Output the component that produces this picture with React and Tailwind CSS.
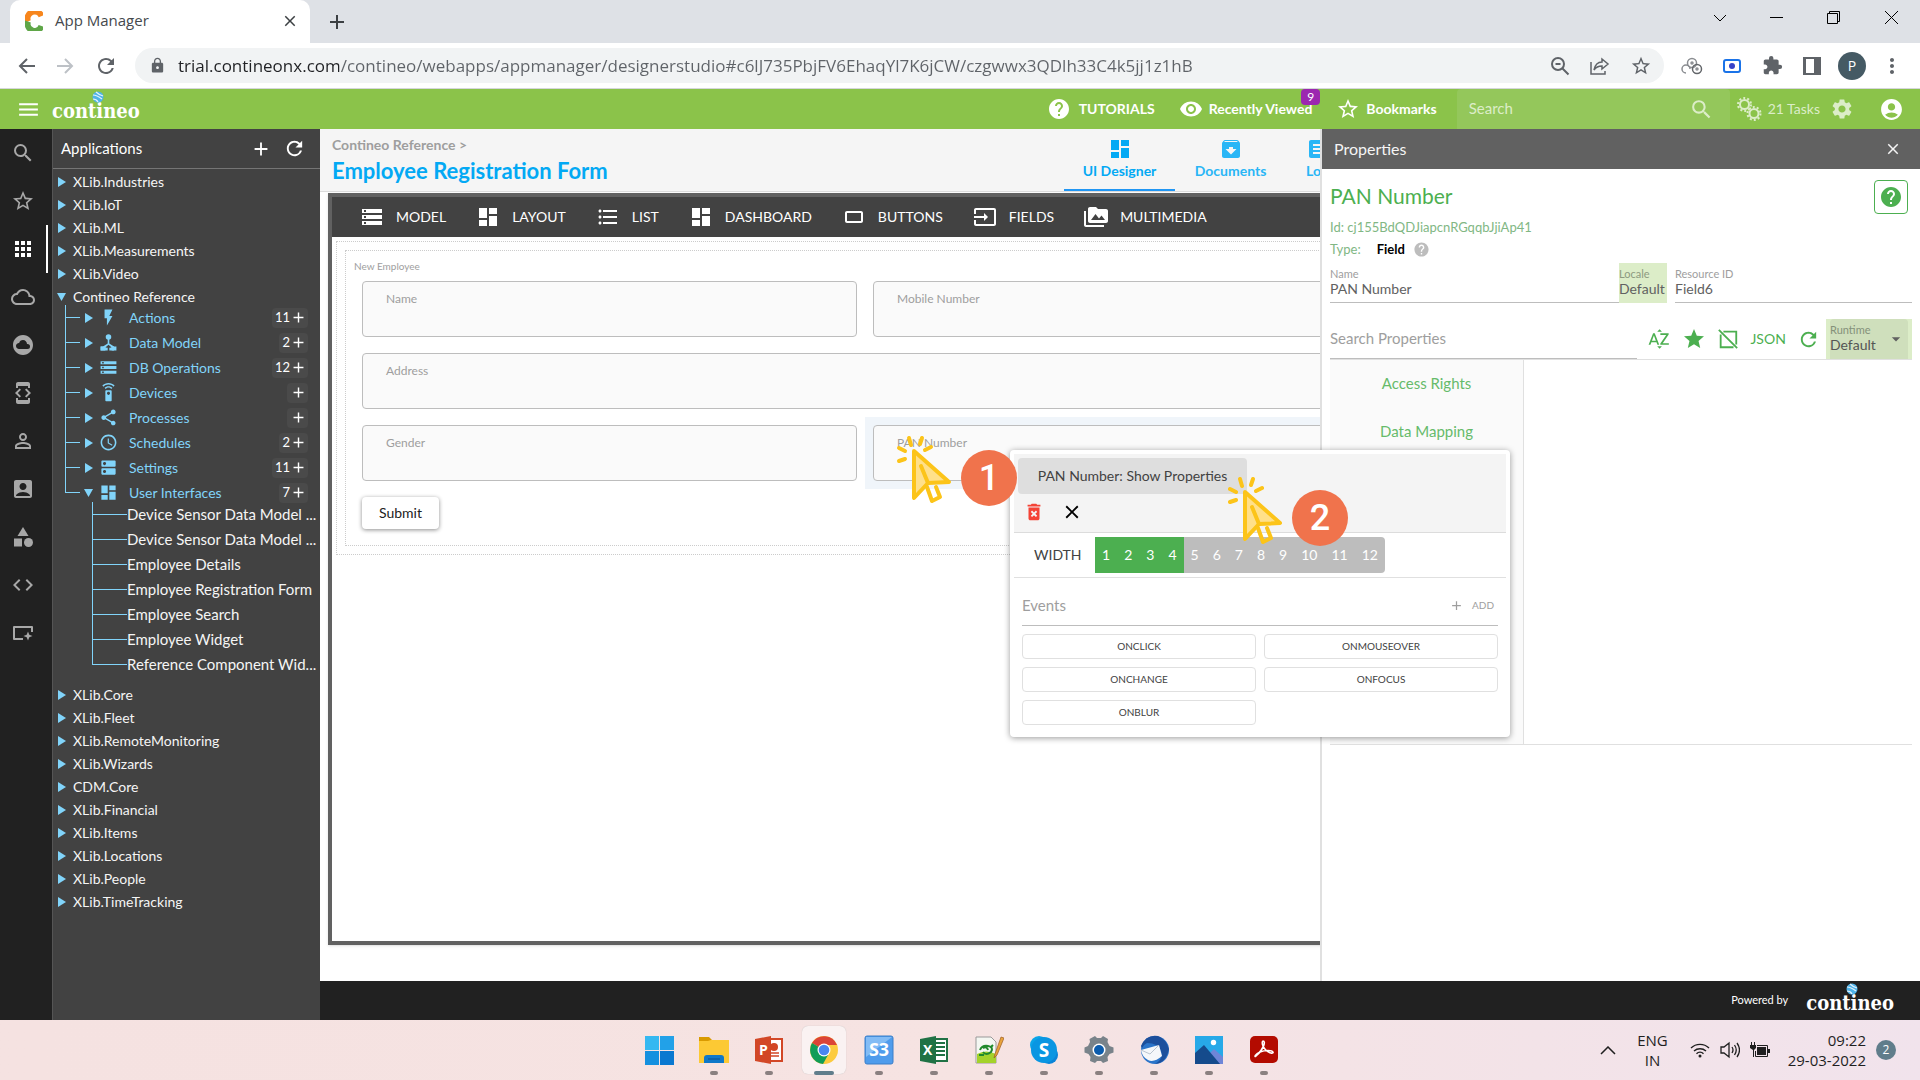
import {
  MdAccessTime,
  MdAccountBox,
  MdAccountCircle,
  MdAdd,
  MdApps,
  MdArchive,
  MdArrowDropDown,
  MdArticle,
  MdCategory,
  MdClose,
  MdCloudCircle,
  MdCloudQueue,
  MdCode,
  MdCrop32,
  MdDashboard,
  MdDeleteForever,
  MdDeveloperMode,
  MdDns,
  MdExtension,
  MdFlashOn,
  MdFormatListBulleted,
  MdHelp,
  MdInput,
  MdLock,
  MdMenu,
  MdMoreVert,
  MdPermIdentity,
  MdPermMedia,
  MdRefresh,
  MdSearch,
  MdSettings,
  MdSettingsRemote,
  MdShare,
  MdSortByAlpha,
  MdStar,
  MdStarBorder,
  MdStorage,
  MdVisibility,
} from "react-icons/md";

const UI_FONT = "font-[Lato,sans-serif]";
const OS_FONT = "font-['Open_Sans',sans-serif]";

function DataModelIcon({ size = 20 }) {
  return (
    <svg width={size} height={size} viewBox="0 0 24 24" fill="currentColor">
      <circle cx="12" cy="5" r="3.5" />
      <path d="M11 7h2v6.2l6 4V22h-6v-3.500l3-.3-4-3.300-4 3.300 3 .3V22H2v-4.800h3l6-4z" />
      <path d="M2 17h6v5H2zM16 17h6v5h-6z" />
    </svg>
  );
}

function ScreenSparkIcon({ size = 24 }) {
  return (
    <svg width={size} height={size} viewBox="0 0 24 24" fill="none">
      <path d="M12 18H3V6h18v5" stroke="currentColor" strokeWidth="2" strokeLinejoin="round" />
      <path d="M17 10.500l1.300 3.200 3.200 1.300-3.200 1.300L17 19.500l-1.300-3.200-3.200-1.300 3.200-1.300z" fill="currentColor" />
    </svg>
  );
}

function NoBoxIcon() {
  return (
    <svg width="22" height="22" viewBox="0 0 24 24" fill="none" stroke="currentColor" strokeWidth="2">
      <path d="M7 4h14v14M4 7v14h14M2 2l20 20" />
    </svg>
  );
}

function GearsIcon() {
  return (
    <svg width="26" height="26" viewBox="0 0 26 26" fill="none" stroke="currentColor">
      <circle cx="8.500" cy="8.500" r="4.500" strokeWidth="2" />
      <circle cx="8.500" cy="8.500" r="6.500" strokeWidth="2" strokeDasharray="2 2.080" />
      <circle cx="18" cy="17.500" r="4.500" strokeWidth="2" />
      <circle cx="18" cy="17.500" r="6.500" strokeWidth="2" strokeDasharray="2 2.080" />
    </svg>
  );
}

function Logo() {
  return (
    <span className="relative inline-block font-['DejaVu_Serif_Condensed','DejaVu_Serif',serif] text-xl leading-6 font-bold text-white">
      contineo
      <svg className="absolute -top-2 left-10" width="12" height="12" viewBox="0 0 12 12">
        <circle cx="6" cy="6" r="5.500" fill="#4fb3e8" />
        <path d="M1 4c3 0 5 1 9 4M4 1c2 2 4 3 7 4M1 8c2 0 4 1 5 3" stroke="#e3f2fd" strokeWidth="1.200" fill="none" />
      </svg>
    </span>
  );
}

function BrowserChrome() {
  return (
    <header className={`${OS_FONT} text-[#5f6368]`}>
      <div className="flex h-[43px] items-center bg-[#dee1e6] pl-[10px]">
        <div className="flex h-full w-[300px] items-center rounded-t-[10px] bg-white pr-[11px] pb-[2px] pl-[15px]">
          <svg width="18" height="20" viewBox="0 0 18 20" fill="none" strokeWidth="6">
            <path d="M16.500 5A6.500 6.500 0 0 0 3 10.500" stroke="#f7861d" />
            <path d="M3 10.500A6.500 6.500 0 0 0 16.500 15" stroke="#5fa648" />
          </svg>
          <span className="ml-3 flex-1 text-[15px] text-[#45494d]">App Manager</span>
          <button aria-label="Close tab" className="text-[#3c4043]"><MdClose size={18} /></button>
        </div>
        <button aria-label="New tab" className="ml-[15px] text-[#3c4043]"><MdAdd size={24} /></button>
        <div className="mb-2 ml-auto flex items-center text-black">
          <button aria-label="Search tabs" className="flex w-[57px] justify-center">
            <svg width="14" height="8" viewBox="0 0 14 8" fill="none" stroke="currentColor"><path d="M1 1l6 6 6-6" /></svg>
          </button>
          <button aria-label="Minimize" className="flex w-[57px] justify-center">
            <svg width="13" height="13" viewBox="0 0 13 13" stroke="currentColor"><path d="M0 6.500h13" /></svg>
          </button>
          <button aria-label="Restore" className="flex w-[57px] justify-center">
            <svg width="13" height="13" viewBox="0 0 13 13" fill="none" stroke="currentColor">
              <path d="M.5 2.500h10v10H.5zM2.500 2.500v-2h10v10h-2" />
            </svg>
          </button>
          <button aria-label="Close" className="flex w-[58px] justify-center">
            <svg width="13" height="13" viewBox="0 0 13 13" stroke="currentColor"><path d="M0 0l13 13M13 0L0 13" /></svg>
          </button>
        </div>
      </div>

      <div className="flex h-[46px] items-center border-b border-[#d5d7da] bg-white">
        <div className="flex w-[135px] items-center gap-5 pl-[18px]">
          <button aria-label="Back">
            <svg width="18" height="18" viewBox="0 0 18 18" fill="none" stroke="currentColor" strokeWidth="2"><path d="M17 9H2M9 2L2 9l7 7" /></svg>
          </button>
          <button aria-label="Forward" className="text-[#bdc1c6]">
            <svg width="18" height="18" viewBox="0 0 18 18" fill="none" stroke="currentColor" strokeWidth="2"><path d="M1 9h15M9 2l7 7-7 7" /></svg>
          </button>
          <button aria-label="Reload"><MdRefresh size={24} /></button>
        </div>
        <div className="flex h-[35px] flex-1 items-center rounded-full bg-[#f1f3f4] pr-3 pl-[14px]">
          <MdLock size={17} />
          <input
            aria-label="Address"
            defaultValue="trial.contineonx.com/contineo/webapps/appmanager/designerstudio#c6lJ735PbjFV6EhaqYl7K6jCW/czgwwx3QDlh33C4k5jj1z1hB"
            className="ml-3 flex-1 bg-[linear-gradient(to_right,#202124_161px,#5f6368_161px)] bg-clip-text text-[17px] text-transparent outline-none"
          />
          <div className="flex items-center gap-5">
            <button aria-label="Zoom out">
              <svg width="20" height="20" viewBox="0 0 20 20" fill="none" stroke="currentColor" strokeWidth="2">
                <circle cx="8" cy="8" r="6" /><path d="M12.500 12.500l6 6M5.500 8h5" />
              </svg>
            </button>
            <button aria-label="Share">
              <svg width="20" height="20" viewBox="0 0 20 20" fill="none" stroke="currentColor" strokeWidth="1.500">
                <path d="M1 6v12h14v-3M12 3l6 5-6 5v-3c-4 0-6 1-8 4 1-5 4-8 8-8z" />
              </svg>
            </button>
            <button aria-label="Bookmark page"><MdStarBorder size={22} /></button>
          </div>
        </div>
        <div className="mr-2 ml-2 grid w-60 grid-cols-6 place-items-center">
          <svg width="22" height="18" viewBox="0 0 22 18" fill="none" stroke="#8a8d91" strokeWidth="1.500">
            <circle cx="11" cy="6" r="4.500" /><circle cx="11" cy="6" r="1" /><circle cx="16" cy="12" r="4.500" stroke="#63666a" />
            <circle cx="16" cy="12" r="1" /><path d="M5 16a4 4 0 1 1 4-4" />
          </svg>
          <svg width="18" height="14" viewBox="0 0 18 14" fill="none">
            <rect x="1" y="1" width="16" height="12" rx="2" stroke="#1a73e8" strokeWidth="2" /><circle cx="9" cy="7" r="3" fill="#3742c8" />
          </svg>
          <MdExtension size={21} />
          <svg width="18" height="18" viewBox="0 0 18 18" fill="none">
            <path d="M1.500 1.500h15v15h-15z" stroke="currentColor" strokeWidth="3" /><path d="M3 2h8v14H3z" fill="#fff" /><path d="M11 0h7v18h-7z" fill="#fff" /><path d="M2 1h15v16H2z" stroke="currentColor" strokeWidth="2" /><path d="M2 2h9v14H2z" fill="#fff" opacity="0" /><path d="M11 2h6v14h-6z" fill="currentColor" />
          </svg>
          <button className="size-7 rounded-full bg-[#455a64] text-sm text-white">P</button>
          <button aria-label="Menu"><MdMoreVert size={24} /></button>
        </div>
      </div>
    </header>
  );
}

function AppBar() {
  return (
    <nav className="flex h-10 items-center bg-[#8bc34a] text-sm font-bold text-white">
      <button aria-label="Toggle menu" className="ml-4"><MdMenu size={25} /></button>
      <a href="#home" className="mt-1 ml-[11px]"><Logo /></a>
      <button className="ml-auto flex items-center gap-2"><MdHelp size={24} />TUTORIALS</button>
      <button className="relative ml-6 flex items-center gap-[6px]">
        <MdVisibility size={24} />
        Recently Viewed
        <span className="absolute -top-2 -right-2 flex h-4 w-[19px] items-center justify-center rounded-sm bg-[#9c27b0] text-xs font-normal">9</span>
      </button>
      <button className="ml-6 flex items-center gap-[6px]"><MdStarBorder size={24} />Bookmarks</button>
      <div className="ml-5 flex h-full w-[273px] items-center rounded-t-sm bg-[#94c75b] px-3 font-normal">
        <input aria-label="Search" placeholder="Search" className="min-w-0 flex-1 text-[15px] outline-none placeholder:text-[#dcedc8]" />
        <button aria-label="Run search" className="mr-1 text-[#dcedc8]"><MdSearch size={25} /></button>
      </div>
      <button className="ml-[6px] flex items-center gap-[6px] font-normal text-[#dcedc8]"><GearsIcon />21 Tasks</button>
      <button aria-label="Settings" className="ml-[10px] text-[#dcedc8]"><MdSettings size={24} /></button>
      <button aria-label="Account" className="mr-4 ml-[25px]"><MdAccountCircle size={25} /></button>
    </nav>
  );
}

const railItems = [
  { label: "Search", icon: MdSearch },
  { label: "Favourites", icon: MdStarBorder },
  { label: "Applications", icon: MdApps, active: true },
  { label: "Cloud", icon: MdCloudQueue },
  { label: "Cloud services", icon: MdCloudCircle },
  { label: "Developer", icon: MdDeveloperMode },
  { label: "Users", icon: MdPermIdentity },
  { label: "Contacts", icon: MdAccountBox },
  { label: "Categories", icon: MdCategory },
  { label: "Code", icon: MdCode },
  { label: "Screens", icon: ScreenSparkIcon },
];

function Rail() {
  return (
    <div className="flex w-[53px] flex-col border-r border-[#555] bg-[#212121]">
      {railItems.map(({ label, icon: Icon, active }) => (
        <button
          key={label}
          aria-label={label}
          className={`mr-1 flex h-12 items-center justify-center border-r-2 ${active ? "border-white text-white" : "border-transparent text-[#a8a8a8]"}`}
        >
          <Icon size={24} />
        </button>
      ))}
    </div>
  );
}

const topApps = ["XLib.Industries", "XLib.IoT", "XLib.ML", "XLib.Measurements", "XLib.Video"];
const bottomApps = [
  "XLib.Core",
  "XLib.Fleet",
  "XLib.RemoteMonitoring",
  "XLib.Wizards",
  "CDM.Core",
  "XLib.Financial",
  "XLib.Items",
  "XLib.Locations",
  "XLib.People",
  "XLib.TimeTracking",
];

const sections = [
  { label: "Actions", icon: MdFlashOn, count: 11 },
  { label: "Data Model", icon: DataModelIcon, count: 2 },
  { label: "DB Operations", icon: MdStorage, count: 12 },
  { label: "Devices", icon: MdSettingsRemote },
  { label: "Processes", icon: MdShare },
  { label: "Schedules", icon: MdAccessTime, count: 2 },
  { label: "Settings", icon: MdDns, count: 11 },
  { label: "User Interfaces", icon: MdDashboard, count: 7, open: true },
];

const screens = [
  "Device Sensor Data Model ...",
  "Device Sensor Data Model ...",
  "Employee Details",
  "Employee Registration Form",
  "Employee Search",
  "Employee Widget",
  "Reference Component Wid...",
];

function Caret({ open }) {
  return (
    <svg className="shrink-0 text-[#81d4fa]" width="9" height="10" viewBox="0 0 9 10" fill="currentColor">
      {open ? <path d="M0 1h9L4.500 9z" /> : <path d="M1 0l8 5-8 5z" />}
    </svg>
  );
}

function AppRow({ label, open }) {
  return (
    <button className="flex h-[23px] w-full items-center gap-[7px] pl-1 text-left">
      <Caret open={open} />
      {label}
    </button>
  );
}

function Sidebar() {
  return (
    <aside className="w-[267px] shrink-0 bg-[#424242] text-sm text-[#f5f5f5]">
      <div className="flex h-10 items-center border-b border-[#757575] pr-[14px] pl-2 text-white">
        <h2 className="flex-1 text-[15px]">Applications</h2>
        <button aria-label="Add application" className="mr-[11px]"><MdAdd size={22} /></button>
        <button aria-label="Refresh"><MdRefresh size={23} /></button>
      </div>

      <ul className="pt-[1px]">
        {topApps.map((name) => (
          <li key={name}><AppRow label={name} /></li>
        ))}
        <li>
          <AppRow label="Contineo Reference" open />
          <ul className="-mt-[3px] pr-3 pl-3">
            {sections.map(({ label, icon: Icon, count, open }) => (
              <li key={label} className="flex h-[25px] items-center text-[#81d4fa]">
                {/* tree branch */}
                <span className={`w-[15px] border-l border-[#81d4fa] ${open ? "h-[13px] self-start border-b" : "h-full"}`}>
                  {!open && <span className="block h-[13px] border-b border-[#81d4fa]" />}
                </span>
                <button className="flex flex-1 items-center pl-1 text-left">
                  <Caret open={open} />
                  <span className="ml-[6px] flex w-[30px]"><Icon size={19} /></span>
                  {label}
                </button>
                <button aria-label={`Add to ${label}`} className="flex h-5 items-center rounded-sm bg-[#4a4a4a] pr-[1px] pl-[3px] text-[13px] text-white">
                  {count}
                  <MdAdd size={17} />
                </button>
              </li>
            ))}
          </ul>
          <ul className="-mt-[3px] mb-[6px] pl-[39px] text-[15px]">
            {screens.map((name, i) => (
              <li key={i} className="flex h-[25px] items-center">
                <span className={`w-[35px] shrink-0 border-l border-[#81d4fa] ${i === screens.length - 1 ? "h-[13px] self-start border-b" : "h-full"}`}>
                  {i < screens.length - 1 && <span className="block h-[13px] border-b border-[#81d4fa]" />}
                </span>
                <a href="#screen" className="whitespace-nowrap">{name}</a>
              </li>
            ))}
          </ul>
        </li>
        {bottomApps.map((name) => (
          <li key={name}><AppRow label={name} /></li>
        ))}
      </ul>
    </aside>
  );
}

const paletteItems = [
  { label: "MODEL", icon: MdStorage },
  { label: "LAYOUT", icon: MdDashboard },
  { label: "LIST", icon: MdFormatListBulleted },
  { label: "DASHBOARD", icon: MdDashboard },
  { label: "BUTTONS", icon: MdCrop32 },
  { label: "FIELDS", icon: MdInput },
  { label: "MULTIMEDIA", icon: MdPermMedia },
];

function Field({ label, wide, selected }) {
  return (
    <div className={`p-2 ${wide ? "col-span-2" : ""} ${selected ? "bg-[#f0f5fa]" : ""}`}>
      <label className="block h-14 rounded border border-[#bdbdbd] bg-[#fafafa] px-[23px] pt-[9px] text-xs leading-4 text-[#9e9e9e]">
        {label}
        <input className="block h-6 w-full outline-none" />
      </label>
    </div>
  );
}

function Designer() {
  return (
    <main className="flex min-w-0 flex-1 flex-col overflow-hidden bg-white">
      <div className="flex h-[63px] shrink-0 border-b border-[#dcdcdc] bg-[#f5f5f5] pl-3 font-bold">
        <div className="flex-1">
          <p className="mt-2 text-sm leading-4 text-[#9e9e9e]">Contineo Reference &gt;</p>
          <h1 className="mt-1 text-[22px] leading-7 text-[#03a9f4]">Employee Registration Form</h1>
        </div>
        <div role="tablist" className="-mr-[70px] flex text-sm leading-5 text-[#29b6f6]">
          <button role="tab" aria-selected="true" className="flex w-[111px] flex-col items-center border-b-2 border-[#2196f3] pt-2 text-[#03a9f4]">
            <MdDashboard size={24} />
            UI Designer
          </button>
          <button role="tab" className="flex w-[111px] flex-col items-center pt-2">
            <MdArchive size={24} />
            Documents
          </button>
          <button role="tab" className="flex w-[104px] flex-col items-start pt-2 pl-[20px]">
            <MdArticle size={24} />
            Localization
          </button>
        </div>
      </div>

      <div className="mt-[1px] -mr-[82px] mb-9 ml-2 flex-1 border-4 border-[#616161] shadow">
        <div className="flex h-10 items-center bg-[#424242] pl-7 text-sm text-white">
          {paletteItems.map(({ label, icon: Icon }) => (
            <button key={label} className="mr-[30px] flex items-center gap-3"><Icon size={24} />{label}</button>
          ))}
        </div>
        <div className="m-1 border border-dotted border-[#ccc] p-2">
          <form className="border border-dotted border-[#ccc] p-2">
            <p className="h-[14px] text-[10px] leading-[14px] text-[#9e9e9e]">New Employee</p>
            <div className="grid grid-cols-2">
              <Field label="Name" />
              <Field label="Mobile Number" />
              <Field label="Address" wide />
              <Field label="Gender" />
              <Field label="PAN Number" selected />
            </div>
            <button type="button" className="m-2 h-8 rounded-sm bg-white px-[17px] text-sm text-[#212121] shadow-[0_1px_4px_rgba(0,0,0,0.45)]">
              Submit
            </button>
          </form>
        </div>
      </div>
    </main>
  );
}

function PropertiesPanel() {
  return (
    <section className="flex w-[600px] shrink-0 flex-col border-l-2 border-[#e0e0e0] bg-white text-sm text-[#616161]">
      <div className="flex h-10 items-center justify-between bg-[#616161] pr-[18px] pl-3 text-base text-[#f5f5f5]">
        <h2>Properties</h2>
        <button aria-label="Close properties"><MdClose size={18} /></button>
      </div>

      <div className="px-2 pt-[11px]">
        <div className="flex justify-between pr-1">
          <div>
            <h3 className="pt-[2px] text-[21px] leading-7 text-[#4caf50]">PAN Number</h3>
            <p className="mt-2 text-[13px] leading-[18px] text-[#81b784]">Id: cj155BdQDJiapcnRGqqbJjiAp41</p>
            <p className="mt-1 flex items-center text-[13px] leading-[18px] text-[#81b784]">
              Type: <strong className="ml-4 text-black">Field</strong>
              <MdHelp size={17} className="ml-2 text-[#bdbdbd]" />
            </p>
          </div>
          <button aria-label="Help" className="flex size-[34px] items-center justify-center rounded-sm border border-[#4caf50] text-[#4caf50]"><MdHelp size={24} /></button>
        </div>

        <div className="mt-[5px] flex h-10">
          <label className="flex-1 border-b border-[#bdbdbd] pt-1 text-[11px] leading-[14px] text-[#9e9e9e]">
            Name
            <input defaultValue="PAN Number" className="block w-full text-sm leading-4 text-[#616161] outline-none" />
          </label>
          <label className="w-12 bg-[#dcedc8] pt-1 text-[11px] leading-[14px] text-[#8c9a80]">
            Locale
            <select className="block w-full appearance-none text-sm leading-4 text-[#616161] outline-none"><option>Default</option></select>
          </label>
          <label className="ml-2 w-[237px] border-b border-[#bdbdbd] pt-1 text-[11px] leading-[14px] text-[#9e9e9e]">
            Resource ID
            <input defaultValue="Field6" className="block w-full text-sm leading-4 text-[#616161] outline-none" />
          </label>
        </div>

        <div className="mt-4 flex h-[41px] border-b border-[#e0e0e0] text-[#4caf50]">
          <input aria-label="Search Properties" placeholder="Search Properties" className="min-w-0 flex-1 border-b border-[#bdbdbd] text-[15px] outline-none placeholder:text-[#9e9e9e]" />
          <div className="flex w-[189px] items-center justify-between pr-[6px] pl-[10px]">
            <button aria-label="Sort"><MdSortByAlpha size={24} /></button>
            <button aria-label="Favourites"><MdStar size={24} /></button>
            <button aria-label="Hide empty"><NoBoxIcon /></button>
            <button>JSON</button>
            <button aria-label="Reload"><MdRefresh size={23} /></button>
          </div>
          <div className="relative w-[86px] bg-[#dcedc8] px-1">
            <label className="block h-full rounded-t-sm bg-[#cfdfbc] pt-1 text-[11px] leading-[14px] text-[#84917a]">
              Runtime
              <select className="block w-full appearance-none text-sm leading-4 text-[#555] outline-none"><option>Default</option></select>
            </label>
            <MdArrowDropDown size={20} className="pointer-events-none absolute top-[10px] right-[6px] text-[#616161]" />
          </div>
        </div>

        <div className="flex h-[385px] border-b border-[#e0e0e0]">
          <div className="flex w-[194px] flex-col border-r border-[#e0e0e0] bg-[#fafafa] text-[15px] text-[#66bb6a]">
            <button className="h-12">Access Rights</button>
            <button className="h-12">Data Mapping</button>
          </div>
        </div>
      </div>
    </section>
  );
}

const widths = [1, 2, 3, 4, 5, 6, 7, 8, 9, 10, 11, 12];
const events = ["ONCLICK", "ONMOUSEOVER", "ONCHANGE", "ONFOCUS", "ONBLUR"];

function FieldMenu() {
  return (
    <div className="absolute top-[321px] left-[1010px] w-[500px] rounded bg-white p-1 text-sm text-[#424242] shadow-[0_1px_6px_rgba(0,0,0,0.4)]">
      <div className="h-[79px] border-b border-[#dcdcdc] bg-[#f4f4f4] p-1">
        <button className="h-9 min-w-[229px] rounded-sm bg-[#dedede] px-4">PAN Number: Show Properties</button>
        <div className="flex h-9 items-center gap-4 pl-[5px]">
          <button aria-label="Delete" className="text-[#f44336]"><MdDeleteForever size={22} /></button>
          <button aria-label="Dismiss" className="text-black"><MdClose size={22} /></button>
        </div>
      </div>
      <div className="flex h-[45px] items-center border-b border-[#e0e0e0] pl-5">
        <span className="w-[61px]">WIDTH</span>
        <div className="flex h-9 overflow-hidden rounded-r-sm text-white">
          {widths.map((n) => (
            <button key={n} className={`px-[7px] ${n <= 4 ? "bg-[#4caf50]" : "bg-[#bdbdbd]"}`}>{n}</button>
          ))}
        </div>
      </div>
      <div className="px-2 pt-2 pb-2">
        <div className="flex h-10 items-center justify-between border-b border-[#bdbdbd] text-[#9e9e9e]">
          <h4 className="text-[15px]">Events</h4>
          <button className="flex items-center gap-2 pr-1 text-[10px]"><MdAdd size={15} />ADD</button>
        </div>
        <div className="mt-2 grid grid-cols-2 gap-2">
          {events.map((name) => (
            <button key={name} className="h-[25px] rounded-sm border border-[#e0e0e0] text-[10px]">{name}</button>
          ))}
        </div>
      </div>
    </div>
  );
}

function ClickCursor({ className }) {
  return (
    <svg className={`pointer-events-none absolute ${className}`} width="60" height="70" viewBox="0 0 60 70" fill="none" stroke="#fcc419" strokeWidth="4" strokeLinecap="round" strokeLinejoin="round">
      <path d="M18 16l35 31-21 1-14 15z" fill="#ffe08a" />
      <path d="M25 31l7 17M31 52l5 14 8-4-4-10M13 3l2 7M26 3l-2 6M35 12l-6 3M3 13l6 3M3 26l6-2" />
    </svg>
  );
}

function StepBadge({ n, className }) {
  return (
    <span className={`absolute flex size-14 items-center justify-center rounded-full bg-[#f0734c] font-[Roboto,sans-serif] text-4xl font-medium text-white ${className}`}>{n}</span>
  );
}

const dots = "after:absolute after:-bottom-[10px] after:left-1/2 after:h-1 after:w-2 after:-translate-x-1/2 after:rounded-full after:bg-[#8a8080]";

function TaskButton({ label, children, start, active }) {
  return (
    <button aria-label={label} className={`flex h-12 w-11 items-center justify-center rounded-md ${active ? "bg-[#faf2f2] shadow-[0_0_1px_#bbb]" : ""}`}>
      <span className={`relative block ${start ? "" : dots} ${active ? "after:w-5! after:bg-[#607d8b]!" : ""}`}>
        <svg width="30" height="30" viewBox="0 0 30 30">{children}</svg>
      </span>
    </button>
  );
}

function Taskbar() {
  return (
    <footer className={`${OS_FONT} relative flex h-[60px] items-center justify-end bg-linear-to-r from-[#f5e2e1] via-[#f6e3e2] to-[#f1e3ec] text-[#1f1f1f]`}>
      <div className="absolute left-[637px] flex gap-[11px]">
        <TaskButton label="Start" start>
          <path d="M1 1h14v14H1z" fill="#35b8f1" />
          <path d="M16 1h14v14H16z" fill="#22a1e8" />
          <path d="M1 16h14v14H1z" fill="#1590df" />
          <path d="M16 16h14v14H16z" fill="#0a78d0" />
        </TaskButton>
        <TaskButton label="File Explorer">
          <path d="M0 2h10l3 3v5H0z" fill="#d99a00" />
          <path d="M0 6h9l3-1h18v23H0z" fill="#fcc934" />
          <path d="M5 28v-5q0-3 3-3h14q3 0 3 3v5z" fill="#0f78c9" />
          <path d="M9 24h12" stroke="#0b4f8c" />
        </TaskButton>
        <TaskButton label="PowerPoint">
          <path d="M14 4h14v22H14z" fill="#fff" stroke="#d24726" strokeWidth="2" />
          <path d="M17 18h8M17 21h8" stroke="#d24726" strokeWidth="1.500" />
          <circle cx="20" cy="12" r="4" fill="#d24726" />
          <path d="M1 4l16-3v28L1 26z" fill="#d24726" />
          <text x="5" y="20" fontSize="14" fontWeight="700" fill="#fff">P</text>
        </TaskButton>
        <TaskButton label="Chrome" active>
          <circle cx="15" cy="15" r="14" fill="#fccb3e" />
          <path d="M15 15L3 8a14 14 0 0 1 25 2H15z" fill="#db4437" />
          <path d="M15 15L3 8a14 14 0 0 0 11 21l5-9z" fill="#109d58" />
          <circle cx="15" cy="15" r="6.500" fill="#fff" />
          <circle cx="15" cy="15" r="5.300" fill="#4a86f0" />
        </TaskButton>
        <TaskButton label="S3 Browser">
          <rect x="1" y="1" width="28" height="28" rx="2" fill="#4f9cec" stroke="#3a7ec8" />
          <path d="M2 2h26L2 22z" fill="#83bcf5" />
          <text x="15" y="21" fontSize="18" fontWeight="700" fill="#fff" textAnchor="middle">S3</text>
        </TaskButton>
        <TaskButton label="Excel">
          <path d="M14 4h14v22H14z" fill="#fff" stroke="#207245" strokeWidth="2" />
          <path d="M17 8h9M17 12h9M17 16h9M17 20h9" stroke="#207245" strokeWidth="2" />
          <path d="M1 4l16-3v28L1 26z" fill="#207245" />
          <text x="4" y="20" fontSize="14" fontWeight="700" fill="#fff">X</text>
        </TaskButton>
        <TaskButton label="Notepad++">
          <path d="M2 2h15l5 5v21H2z" fill="#f4f7f2" stroke="#999" />
          <path d="M3 19q9-5 19 0v9H3z" fill="#a4d22a" />
          <path d="M6 15q2-5 8-4t3 6q-5 4-8 0M9 13q4-2 5 2M5 20h5M17 12l2-2" stroke="#208a2c" strokeWidth="2" fill="none" />
          <path d="M27 2l-6 17-1 4 3-3 7-17z" fill="#e9a33b" stroke="#9b5c24" strokeWidth=".7" />
        </TaskButton>
        <TaskButton label="Skype">
          <circle cx="10" cy="10" r="9" fill="#0aa5e8" />
          <circle cx="20" cy="20" r="9" fill="#0a84d8" />
          <circle cx="15" cy="15" r="13" fill="#0996e2" />
          <text x="15" y="22" fontSize="19" fontWeight="700" fill="#fff" textAnchor="middle">S</text>
        </TaskButton>
        <TaskButton label="Settings">
          <path d="M11 1l2 2h4l2-2 5 3-.5 3 2 4 4 1.500v5l-4 1.500-2 3 .5 4-5 2-2-2h-4l-2 2-5-2 .5-4-2-3-4-1.500v-5L4 11l2-4-.5-3z" fill="#79838a" />
          <circle cx="15" cy="15" r="6.500" fill="#fff" />
          <circle cx="15" cy="15" r="5" fill="#0b5cad" />
        </TaskButton>
        <TaskButton label="Thunderbird">
          <circle cx="16" cy="15" r="14" fill="#2b74c9" />
          <path d="M2 11q5-12 17-10 8 3 11 13-3 14-14 15 9-5 6-13T8 8q-4 2-5 5z" fill="#1c4f9c" />
          <path d="M2 15l18-5 3 11q-8 7-14 4-6-3-7-10z" fill="#f5f7fa" />
          <path d="M2 15l9 4 9-9" fill="none" stroke="#b9c4d0" />
        </TaskButton>
        <TaskButton label="Photos">
          <path d="M1 1h28v28H1z" fill="#27a9e8" />
          <path d="M14 29V20l6-6 9 8v7z" fill="#6e86d8" />
          <path d="M1 18l9-8 16 19H1z" fill="#154b8c" />
          <circle cx="19.500" cy="7.500" r="2.700" fill="#fff" />
        </TaskButton>
        <TaskButton label="Acrobat">
          <rect x="1" y="1" width="28" height="27" rx="5" fill="#b30b00" />
          <path d="M14 6c3 0 1 8-7 15-2 2-1-2 4-4s12-2 13 0-6 2-10-6c-1-2-1-5 0-5z" fill="none" stroke="#fff" strokeWidth="1.600" />
        </TaskButton>
      </div>

      <svg width="16" height="9" viewBox="0 0 16 9" fill="none" stroke="currentColor" strokeWidth="1.500"><path d="M1 8l7-7 7 7" /></svg>
      <p className="ml-[21px] text-center text-[15px] leading-5">ENG<br />IN</p>
      <div className="ml-[22px] flex items-center gap-[10px]">
        <svg width="20" height="16" viewBox="0 0 20 16" fill="none" stroke="currentColor" strokeWidth="1.400">
          <path d="M1 6a13 13 0 0 1 18 0M4 9a9 9 0 0 1 12 0M6.500 11.700a5 5 0 0 1 7 0" /><circle cx="10" cy="14" r="1.500" fill="currentColor" stroke="none" />
        </svg>
        <svg width="20" height="18" viewBox="0 0 20 18" fill="none" stroke="currentColor" strokeWidth="1.300">
          <path d="M1 6h3l5-4v14l-5-4H1zM12 6q2 3 0 6M14.500 4q3.500 5 0 10M17 2q5 7 0 14" />
        </svg>
        <svg width="20" height="16" viewBox="0 0 20 16" fill="currentColor">
          <path d="M1 0h1v3h2V0h1v3h1v3L4 8v7H3V8L0 6V3h1z" /><path d="M7 5h9v8H7z" /><path d="M7 3.500h10.500v11H5.500V9" fill="none" stroke="currentColor" /><path d="M18 7h2v4h-2z" />
        </svg>
      </div>
      <p className="ml-[18px] text-right text-[15px] leading-5">09:22<br />29-03-2022</p>
      <span className="mr-6 ml-[10px] flex size-5 items-center justify-center rounded-full bg-[#607d8b] text-xs text-white">2</span>
    </footer>
  );
}

export default function App() {
  return (
    <div className={`${UI_FONT} flex min-h-screen flex-col overflow-hidden bg-white`}>
      <BrowserChrome />
      <AppBar />
      <div className="relative flex flex-1 bg-[#424242]">
        <Rail />
        <Sidebar />
        <div className="flex min-w-0 flex-1 flex-col">
          <div className="flex flex-1">
            <Designer />
            <PropertiesPanel />
          </div>
          <div className="flex h-[39px] items-center justify-end bg-[#212121] pr-[26px] text-[11px] text-white">
            Powered by
            <a href="#contineo" className="mt-1 ml-[18px]"><Logo /></a>
          </div>
        </div>

        <FieldMenu />
        <ClickCursor className="top-[306px] left-[896px]" />
        <ClickCursor className="top-[347px] left-[1227px]" />
        <StepBadge n={1} className="top-[321px] left-[961px]" />
        <StepBadge n={2} className="top-[361px] left-[1292px]" />
      </div>
      <Taskbar />
    </div>
  );
}
